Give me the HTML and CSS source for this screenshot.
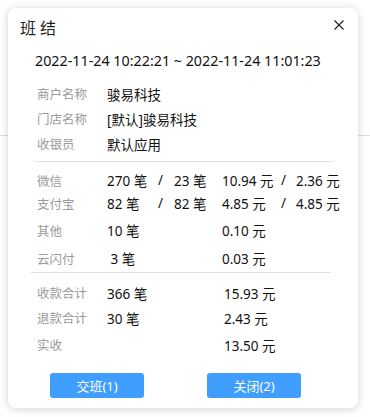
FILE: index.html
```html
<!DOCTYPE html>
<html lang="zh-CN">
<head>
<meta charset="utf-8">
<title>班结</title>
<link rel="stylesheet" href="styles.css">
</head>
<body>
<div class="dialog">
  <div class="header">
    <span class="title">班结</span>
    <span class="close">
      <svg width="10" height="10" viewBox="0 0 10 10"><path d="M0.5 0.5 L9.5 9.5 M9.5 0.5 L0.5 9.5" stroke="#222" stroke-width="1.2" fill="none"/></svg>
    </span>
  </div>
  <div class="date">2022-11-24 10:22:21 ~ 2022-11-24 11:01:23</div>

  <div class="info">
    <div class="irow"><span class="label">商户名称</span><span class="val">骏易科技</span></div>
    <div class="irow"><span class="label">门店名称</span><span class="val">[默认]骏易科技</span></div>
    <div class="irow"><span class="label">收银员</span><span class="val">默认应用</span></div>
  </div>

  <div class="divider d1"></div>

  <div class="pay">
    <div class="prow r1"><span class="label">微信</span><span>270 笔</span><span>/</span><span>23 笔</span><span>10.94 元</span><span>/</span><span>2.36 元</span></div>
    <div class="prow r2"><span class="label">支付宝</span><span>82 笔</span><span>/</span><span>82 笔</span><span>4.85 元</span><span>/</span><span>4.85 元</span></div>
    <div class="prow r3"><span class="label">其他</span><span>10 笔</span><span></span><span></span><span>0.10 元</span></div>
    <div class="prow r4"><span class="label">云闪付</span><span>&nbsp;3 笔</span><span></span><span></span><span>0.03 元</span></div>
  </div>

  <div class="divider d2"></div>

  <div class="sum">
    <div class="srow"><span class="label">收款合计</span><span>366 笔</span><span>15.93 元</span></div>
    <div class="srow"><span class="label">退款合计</span><span>30 笔</span><span>2.43 元</span></div>
    <div class="srow last"><span class="label">实收</span><span></span><span>13.50 元</span></div>
  </div>

  <div class="footer">
    <button class="btn">交班(1)</button>
    <button class="btn">关闭(2)</button>
  </div>
</div>
</body>
</html>
```

FILE: styles.css
```css
html, body {
  margin: 0;
  padding: 0;
}
body {
  width: 370px;
  height: 417px;
  overflow: hidden;
  font-family: "Noto Sans", "Noto Sans CJK SC", sans-serif;
  color: #111;
  background: #fff linear-gradient(to bottom, transparent 135px, #dedede 135px, #dedede 136px, transparent 136px);
  padding: 8px;
  box-sizing: border-box;
}
.dialog {
  width: 350px;
  height: 400px;
  background: #fff;
  border-radius: 8px;
  box-shadow: 0 1px 9px rgba(0, 0, 0, 0.18);
  display: flex;
  flex-direction: column;
  box-sizing: border-box;
}
.header {
  height: 38px;
  display: flex;
  align-items: center;
  justify-content: space-between;
  padding: 0 14px 0 12px;
}
.title {
  font-size: 16px;
  letter-spacing: 4px;
  color: #222;
}
.close {
  display: flex;
  margin-bottom: 4px;
}
.date {
  height: 30px;
  line-height: 30px;
  padding-left: 27px;
  font-size: 14.3px;
  color: #111;
}
.info {
  margin-top: 5px;
  padding-left: 29px;
}
.irow {
  height: 25px;
  display: flex;
  align-items: center;
}
.label {
  font-size: 12.5px;
  color: #9a9a9a;
}
.irow .label {
  width: 70px;
}
.val {
  font-size: 13.5px;
}
.divider {
  height: 1px;
  background: #e0e0e0;
}
.d1 {
  margin: 5px 24px 0 26px;
}
.d2 {
  margin: 2px 27px 0 23px;
}
.pay {
  padding-left: 29px;
  margin-top: 6px;
}
.prow, .srow {
  display: grid;
  align-items: center;
  font-size: 13.5px;
}
.prow {
  grid-template-columns: 70px 51px 16px 48px 59px 15px auto;
}
.prow.r1 { height: 24px; }
.prow.r2 { height: 22px; }
.prow.r3 { height: 32px; }
.prow.r4 { height: 24px; }
.sum {
  padding-left: 29px;
  margin-top: 7px;
}
.srow {
  height: 25px;
  grid-template-columns: 70px 117px auto;
}
.srow.last {
  margin-top: 2px;
}
.footer {
  display: flex;
  gap: 63px;
  padding-left: 42px;
  margin-top: 16px;
}
.btn {
  width: 94px;
  height: 25px;
  border: none;
  border-radius: 3px;
  background: #409eff;
  color: #fff;
  font-family: "Noto Sans", "Noto Sans CJK SC", sans-serif;
  font-size: 13px;
  padding: 0;
}
```
